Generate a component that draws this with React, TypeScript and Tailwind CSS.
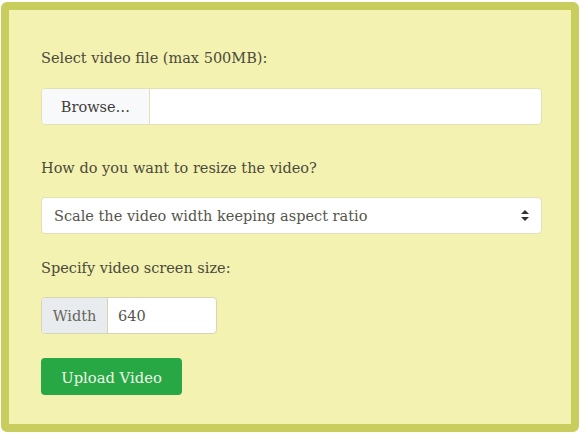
import React from 'react';

const serif = { fontFamily: '"DejaVu Serif", serif' };

export default function App() {
  return (
    <div className="h-[437px] w-[584px] bg-white pl-[1px] pt-[2px]" style={serif}>
      <div className="w-[578px] rounded-md border-8 border-[#c9cd5d] bg-[#f3f2b1] pl-[32px] pr-[29px] pt-[34px] pb-[29px] text-[14.5px] text-[#4b4a3c]">
        <div className="mb-[18px] h-[26px] pt-[2px] leading-6">Select video file (max 500MB):</div>
        <div className="mb-[29px] flex h-[37px] overflow-hidden rounded border border-[#e2e1b5] bg-white">
          <div className="flex w-[108px] items-center justify-center border-r border-[#e2e1b5] bg-[#f8f9fa] pt-[3px] text-[#3f3f3a]">Browse…</div>
          <div className="flex-1" />
        </div>

        <div className="mb-[17px] h-[26px] pt-[2px] leading-6">How do you want to resize the video?</div>
        <div className="mb-5 flex h-[37px] items-center justify-between rounded border border-[#e2e1b5] bg-white pl-3 pr-3 text-[#56554c]">
          <span className="pt-[3px]">Scale the video width keeping aspect ratio</span>
          <svg width="8" height="11" viewBox="0 0 8 11" className="text-[#333]">
            <path d="M4 0 L8 4 L0 4 Z M0 7 L8 7 L4 11 Z" fill="currentColor" />
          </svg>
        </div>

        <div className="mb-[17px] h-[26px] pt-[2px] leading-6">Specify video screen size:</div>
        <div className="mb-6 flex h-[37px] w-[176px] overflow-hidden rounded border border-[#d6d5b5] bg-white">
          <div className="flex w-[66px] items-center justify-center border-r border-[#d6d5b5] bg-[#e9ecef] pt-[3px] text-[#66655d]">Width</div>
          <div className="flex flex-1 items-center pl-[10px] pt-[3px] text-[#56554c]">640</div>
        </div>

        <button className="flex h-[37px] w-[141px] items-center justify-center rounded bg-[#28a745] pt-[3px] text-[14.75px] text-[#eef8e8]">
          Upload Video
        </button>
      </div>
    </div>
  );
}
